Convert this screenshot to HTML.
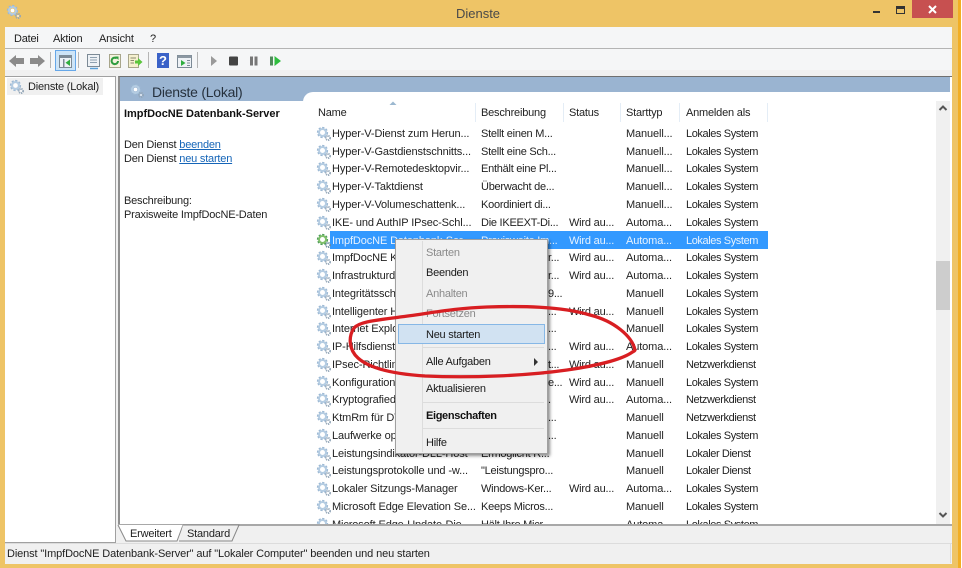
<!DOCTYPE html>
<html><head><meta charset="utf-8"><title>Dienste</title>
<style>
html,body{margin:0;padding:0}
body{width:962px;height:568px;position:relative;overflow:hidden;background:#fff;font-family:"Liberation Sans",sans-serif;font-size:11px;letter-spacing:-.4px;color:#222;filter:blur(.3px)}
div,span,svg{position:absolute}
.r{left:0;width:624px;height:18px;line-height:18px;white-space:nowrap}
.r span{top:0}
.r svg{left:4px;top:1px}
.a{left:20px;letter-spacing:-.12px}.b{left:169px;letter-spacing:-.25px}.c{left:257px;letter-spacing:-.2px}.d{left:314px;letter-spacing:-.12px}.e{left:374px}
.x{left:236px;letter-spacing:-.25px}
.h{top:104px;line-height:18px;color:#222;white-space:nowrap;letter-spacing:-.2px}
.v{top:103px;width:1px;height:19px;background:#e4edf6}
.m{left:30px;white-space:nowrap;line-height:16px;color:#1a1a1a;letter-spacing:-.25px}
.g{color:#8a8a8a}
.s{left:27px;width:121px;height:1px;background:#dcdcdc}
.t{white-space:nowrap;line-height:14px;letter-spacing:-.2px}
a{color:#1565b8;text-decoration:underline}
</style></head><body>
<svg width="0" height="0" style="left:0;top:0"><defs>
<symbol id="gear" viewBox="0 0 16 16">
<circle cx="6.500" cy="6.500" r="4.300" fill="none" stroke="#9db9d4" stroke-width="2.600" stroke-dasharray="2 1.300"/>
<circle cx="6.500" cy="6.500" r="3.500" fill="none" stroke="#b4cce2" stroke-width="2"/>
<circle cx="6.500" cy="6.500" r="1.900" fill="#fff"/>
<circle cx="12" cy="12" r="2.100" fill="none" stroke="#93a6b8" stroke-width="1.800" stroke-dasharray="1.200 .8"/>
<circle cx="12" cy="12" r=".9" fill="#fff"/>
</symbol>
<symbol id="gearg" viewBox="0 0 16 16">
<circle cx="6.500" cy="6.500" r="4.300" fill="none" stroke="#4f9d5b" stroke-width="2.600" stroke-dasharray="2 1.300"/>
<circle cx="6.500" cy="6.500" r="3.500" fill="none" stroke="#7fbf6a" stroke-width="2"/>
<circle cx="6.500" cy="6.500" r="1.900" fill="#fff"/>
<circle cx="12" cy="12" r="2.100" fill="none" stroke="#6a8aa0" stroke-width="1.800" stroke-dasharray="1.200 .8"/>
<circle cx="12" cy="12" r=".9" fill="#fff"/>
</symbol>
</defs></svg>

<!-- window frame -->
<div style="left:0;top:0;width:962px;height:568px;background:#eec466"></div>
<div style="left:958px;top:0;width:3px;height:568px;background:#f2ae24"></div>
<div style="left:961px;top:0;width:1px;height:568px;background:#fff"></div>
<svg style="left:6px;top:4px" width="16" height="16"><use href="#gear"/></svg>
<div style="left:378px;width:200px;top:5px;text-align:center;font-size:13px;letter-spacing:0;line-height:17px;color:#4a4a4a">Dienste</div>
<div style="left:873px;top:11px;width:7px;height:2px;background:#333"></div>
<div style="left:896px;top:6px;width:7px;height:4px;border:1.500px solid #333;border-top-width:3px"></div>
<div style="left:912px;top:0;width:41px;height:18px;background:#c75050"></div>
<svg style="left:927px;top:4px" width="11" height="11"><path d="M2 2L9 9M9 2L2 9" stroke="#fff" stroke-width="2"/></svg>

<!-- client -->
<div style="left:5px;top:27px;width:947px;height:537px;background:#f0f0f0"></div>
<div style="left:5px;top:27px;width:947px;height:21px;background:#f5f6f7"></div>
<div style="left:5px;top:48px;width:947px;height:1px;background:#b4b4b4"></div>
<div style="left:5px;top:49px;width:947px;height:21px;background:#f5f6f7"></div>
<div class="t" style="left:14px;top:32px;color:#1e1e1e">Datei</div>
<div class="t" style="left:53px;top:32px;color:#1e1e1e">Aktion</div>
<div class="t" style="left:99px;top:32px;color:#1e1e1e">Ansicht</div>
<div class="t" style="left:150px;top:32px;color:#1e1e1e">?</div>

<!-- toolbar -->
<svg style="left:0;top:49px" width="300" height="22">
<path d="M9 12L16 6V9H24V15H16V18Z" fill="#8b8b8b"/>
<path d="M45 12L38 6V9H30V15H38V18Z" fill="#8b8b8b"/>
<rect x="50" y="3" width="1" height="16" fill="#b5b5b5"/>
<rect x="55.500" y="1.500" width="20" height="20" fill="#cde4f7" stroke="#66a7e8"/>
<rect x="59.500" y="6.500" width="12" height="12" fill="#eef2f6" stroke="#7c8a96"/><rect x="59.500" y="6.500" width="12" height="2.500" fill="#7c8a96"/>
<path d="M70 10.500V17L65.500 13.800Z" fill="#2fae3f"/><rect x="63" y="10" width="1.500" height="8" fill="#7c8a96"/>
<rect x="78" y="3" width="1" height="16" fill="#b5b5b5"/>
<rect x="87.500" y="5.500" width="12" height="12" fill="#eef2f6" stroke="#7c8a96"/><path d="M90 8.500H97M90 11H97M90 13.500H97" stroke="#8ea0b0"/><path d="M90 19.500H98" stroke="#5ba0d8" stroke-width="1.500"/>
<rect x="109.500" y="5.500" width="11" height="13" fill="#f5f3df" stroke="#a8a68c"/><path d="M118 12a3.200 3.200 0 1 1-1.200-2.600" fill="none" stroke="#2f9d3f" stroke-width="2"/><path d="M115 7.500h3.500v3.500z" fill="#2f9d3f"/>
<rect x="128.500" y="5.500" width="10" height="13" fill="#f5f0cf" stroke="#a8a68c"/><path d="M130.500 9H136M130.500 11.500H134M130.500 14H134" stroke="#8a8a70"/><path d="M135 11.500h3V9l4.500 4-4.500 4v-2.500h-3z" fill="#5bc53c"/>
<rect x="148" y="3" width="1" height="16" fill="#b5b5b5"/>
<rect x="157" y="4" width="12" height="15" fill="#3a62c8"/>
<rect x="177.500" y="6.500" width="14" height="12" fill="#eef2f6" stroke="#7c8a96"/><rect x="177.500" y="6.500" width="14" height="2.500" fill="#8c98a2"/><path d="M181 11V17L185.500 14Z" fill="#2fae3f"/><path d="M187 11.500H190M187 14H190M187 16.500H190" stroke="#7c8a96"/>
<rect x="197" y="3" width="1" height="16" fill="#b5b5b5"/>
<path d="M211 7V17L217 12Z" fill="#9a9a9a"/>
<rect x="229" y="7.500" width="9" height="9" rx="1" fill="#444"/>
<rect x="250" y="7.500" width="3" height="9" fill="#777"/><rect x="254.500" y="7.500" width="3" height="9" fill="#777"/>
<rect x="270" y="7.500" width="3" height="9" fill="#4f8a5a"/><path d="M274.500 7V17L281 12Z" fill="#2fbe3f"/>
</svg>
<div style="left:157px;top:53px;width:12px;height:15px;text-align:center;color:#fff;font-size:13px;font-weight:bold;letter-spacing:0;line-height:15px">?</div>

<!-- left pane -->
<div style="left:5px;top:76px;width:111px;height:467px;background:#fff;border:1px solid #a0a0a0;border-left:0;box-sizing:border-box"></div>
<div style="left:7px;top:78px;width:96px;height:17px;background:#f0f0f0"></div>
<svg style="left:9px;top:79px" width="16" height="16"><use href="#gear"/></svg>
<div class="t" style="left:28px;top:80px;color:#222">Dienste (Lokal)</div>

<!-- right pane -->
<div style="left:118px;top:76px;width:834px;height:449px;background:#fff;border-left:2px solid #8f8f8f;border-top:1px solid #6f6f6f;box-sizing:border-box"></div>
<div style="left:120px;top:77px;width:830px;height:15px;background:#9ab4d1"></div>
<div style="left:120px;top:92px;width:183px;height:9px;background:#9ab4d1"></div>
<div style="left:303px;top:92px;width:12px;height:9px;background:#9ab4d1"></div>
<div style="left:303px;top:92px;width:30px;height:20px;background:#fff;border-radius:10px 0 0 0"></div>
<svg style="left:129px;top:83px" width="16" height="16"><use href="#gear"/></svg>
<div style="left:152px;top:84px;font-size:14px;letter-spacing:-.25px;line-height:17px;color:#26313d;white-space:nowrap">Dienste (Lokal)</div>

<div class="t" style="left:124px;top:107px;font-weight:bold;letter-spacing:-.03px;color:#111">ImpfDocNE Datenbank-Server</div>
<div class="t" style="left:124px;top:138px">Den Dienst <a>beenden</a></div>
<div class="t" style="left:124px;top:152px">Den Dienst <a>neu starten</a></div>
<div class="t" style="left:124px;top:194px">Beschreibung:</div>
<div class="t" style="left:124px;top:208px">Praxisweite ImpfDocNE-Daten</div>

<!-- column headers -->
<svg style="left:389px;top:101px" width="8" height="5"><path d="M.5 4L4 .5L7.500 4Z" fill="#9cb8d0"/></svg>
<div class="h" style="left:318px">Name</div>
<div class="h" style="left:481px">Beschreibung</div>
<div class="h" style="left:569px">Status</div>
<div class="h" style="left:626px">Starttyp</div>
<div class="h" style="left:686px">Anmelden als</div>
<div class="v" style="left:475px"></div><div class="v" style="left:563px"></div><div class="v" style="left:620px"></div><div class="v" style="left:679px"></div><div class="v" style="left:767px"></div>

<!-- list -->
<div style="left:312px;top:124px;width:624px;height:400px;overflow:hidden">
<div style="left:0;top:-1px;width:624px;height:402px">
<div class="r" style="top:2px"><svg width="16" height="16"><use href="#gear"/></svg><span class="a">Hyper-V-Dienst zum Herun...</span><span class="b">Stellt einen M...</span><span class="d">Manuell...</span><span class="e">Lokales System</span></div>
<div class="r" style="top:20px"><svg width="16" height="16"><use href="#gear"/></svg><span class="a">Hyper-V-Gastdienstschnitts...</span><span class="b">Stellt eine Sch...</span><span class="d">Manuell...</span><span class="e">Lokales System</span></div>
<div class="r" style="top:37px"><svg width="16" height="16"><use href="#gear"/></svg><span class="a">Hyper-V-Remotedesktopvir...</span><span class="b">Enthält eine Pl...</span><span class="d">Manuell...</span><span class="e">Lokales System</span></div>
<div class="r" style="top:55px"><svg width="16" height="16"><use href="#gear"/></svg><span class="a">Hyper-V-Taktdienst</span><span class="b">Überwacht de...</span><span class="d">Manuell...</span><span class="e">Lokales System</span></div>
<div class="r" style="top:73px"><svg width="16" height="16"><use href="#gear"/></svg><span class="a">Hyper-V-Volumeschattenk...</span><span class="b">Koordiniert di...</span><span class="d">Manuell...</span><span class="e">Lokales System</span></div>
<div class="r" style="top:91px"><svg width="16" height="16"><use href="#gear"/></svg><span class="a">IKE- und AuthIP IPsec-Schl...</span><span class="b">Die IKEEXT-Di...</span><span class="c">Wird au...</span><span class="d">Automa...</span><span class="e">Lokales System</span></div>
<div class="r" style="top:109px"><div style="left:18px;top:-1px;width:438px;height:18px;background:#3399ff"></div><svg width="16" height="16"><use href="#gearg"/></svg><span class="a" style="color:#e6f2ff">ImpfDocNE Datenbank-Ser...</span><span class="b" style="color:#e6f2ff">Praxisweite Im...</span><span class="c" style="color:#e6f2ff">Wird au...</span><span class="d" style="color:#e6f2ff">Automa...</span><span class="e" style="color:#e6f2ff">Lokales System</span></div>
<div class="r" style="top:126px"><svg width="16" height="16"><use href="#gear"/></svg><span class="a">ImpfDocNE Kommunikation</span><span class="x">r...</span><span class="c">Wird au...</span><span class="d">Automa...</span><span class="e">Lokales System</span></div>
<div class="r" style="top:144px"><svg width="16" height="16"><use href="#gear"/></svg><span class="a">Infrastrukturdienst</span><span class="x">r...</span><span class="c">Wird au...</span><span class="d">Automa...</span><span class="e">Lokales System</span></div>
<div class="r" style="top:162px"><svg width="16" height="16"><use href="#gear"/></svg><span class="a">Integritätsschlüssel</span><span class="x">9...</span><span class="d">Manuell</span><span class="e">Lokales System</span></div>
<div class="r" style="top:180px"><svg width="16" height="16"><use href="#gear"/></svg><span class="a">Intelligenter Hintergrund</span><span class="x">...</span><span class="c">Wird au...</span><span class="d">Manuell</span><span class="e">Lokales System</span></div>
<div class="r" style="top:197px"><svg width="16" height="16"><use href="#gear"/></svg><span class="a">Internet Explorer</span><span class="x">...</span><span class="d">Manuell</span><span class="e">Lokales System</span></div>
<div class="r" style="top:215px"><svg width="16" height="16"><use href="#gear"/></svg><span class="a">IP-Hilfsdienst</span><span class="x">...</span><span class="c">Wird au...</span><span class="d">Automa...</span><span class="e">Lokales System</span></div>
<div class="r" style="top:233px"><svg width="16" height="16"><use href="#gear"/></svg><span class="a">IPsec-Richtlinien</span><span class="x">t...</span><span class="c">Wird au...</span><span class="d">Manuell</span><span class="e">Netzwerkdienst</span></div>
<div class="r" style="top:251px"><svg width="16" height="16"><use href="#gear"/></svg><span class="a">Konfiguration</span><span class="x">e...</span><span class="c">Wird au...</span><span class="d">Manuell</span><span class="e">Lokales System</span></div>
<div class="r" style="top:268px"><svg width="16" height="16"><use href="#gear"/></svg><span class="a">Kryptografiedienste</span><span class="x">.</span><span class="c">Wird au...</span><span class="d">Automa...</span><span class="e">Netzwerkdienst</span></div>
<div class="r" style="top:286px"><svg width="16" height="16"><use href="#gear"/></svg><span class="a">KtmRm für DTC</span><span class="x">...</span><span class="d">Manuell</span><span class="e">Netzwerkdienst</span></div>
<div class="r" style="top:304px"><svg width="16" height="16"><use href="#gear"/></svg><span class="a">Laufwerke optimieren</span><span class="x">...</span><span class="d">Manuell</span><span class="e">Lokales System</span></div>
<div class="r" style="top:322px"><svg width="16" height="16"><use href="#gear"/></svg><span class="a">Leistungsindikator-DLL-Host</span><span class="b">Ermöglicht R...</span><span class="d">Manuell</span><span class="e">Lokaler Dienst</span></div>
<div class="r" style="top:339px"><svg width="16" height="16"><use href="#gear"/></svg><span class="a">Leistungsprotokolle und -w...</span><span class="b">"Leistungspro...</span><span class="d">Manuell</span><span class="e">Lokaler Dienst</span></div>
<div class="r" style="top:357px"><svg width="16" height="16"><use href="#gear"/></svg><span class="a">Lokaler Sitzungs-Manager</span><span class="b">Windows-Ker...</span><span class="c">Wird au...</span><span class="d">Automa...</span><span class="e">Lokales System</span></div>
<div class="r" style="top:375px"><svg width="16" height="16"><use href="#gear"/></svg><span class="a">Microsoft Edge Elevation Se...</span><span class="b">Keeps Micros...</span><span class="d">Manuell</span><span class="e">Lokales System</span></div>
<div class="r" style="top:393px"><svg width="16" height="16"><use href="#gear"/></svg><span class="a">Microsoft Edge-Update-Die...</span><span class="b">Hält Ihre Micr...</span><span class="d">Automa...</span><span class="e">Lokales System</span></div>
</div></div>

<!-- scrollbar -->
<div style="left:936px;top:101px;width:14px;height:423px;background:#f0f0f0"></div>
<div style="left:936px;top:261px;width:14px;height:49px;background:#cdcdcd"></div>
<svg style="left:938px;top:104px" width="10" height="8"><path d="M1.500 6L5 2.500L8.500 6" fill="none" stroke="#555" stroke-width="2"/></svg>
<svg style="left:938px;top:511px" width="10" height="8"><path d="M1.500 2L5 5.500L8.500 2" fill="none" stroke="#555" stroke-width="2"/></svg>

<!-- tabs and status -->
<div style="left:118px;top:524px;width:834px;height:2px;background:#a8a8a8"></div>
<svg style="left:115px;top:524px" width="130" height="20"><path d="M3 1L11 17H62L68 1" fill="#fff" stroke="#888"/><path d="M68 1H124L117 17H64" fill="#f0f0f0" stroke="#888"/></svg>
<div class="t" style="left:130px;top:527px">Erweitert</div>
<div class="t" style="left:187px;top:527px">Standard</div>
<div style="left:5px;top:543px;width:947px;height:1px;background:#dcdcdc"></div>
<div style="left:950px;top:544px;width:1px;height:19px;background:#dcdcdc"></div>
<div class="t" style="left:7px;top:547px;color:#1e1e1e;letter-spacing:-.12px">Dienst "ImpfDocNE Datenbank-Server" auf "Lokaler Computer" beenden und neu starten</div>

<!-- context menu -->
<div style="left:395px;top:239px;width:151px;height:213px;background:#f0f0f0;border:1px solid #a0a0a0;box-sizing:content-box;box-shadow:2px 2px 3px rgba(0,0,0,.45)">
<div style="left:26px;top:1px;width:1px;height:211px;background:#dcdcdc"></div>
<div style="left:2px;top:84px;width:145px;height:18px;background:#d1e2f2;border:1px solid #86b7e6"></div>
<div class="m g" style="top:5px">Starten</div>
<div class="m" style="top:25px">Beenden</div>
<div class="m g" style="top:46px">Anhalten</div>
<div class="m g" style="top:66px">Fortsetzen</div>
<div class="m" style="top:87px">Neu starten</div>
<div class="s" style="top:107px"></div>
<div class="m" style="top:114px">Alle Aufgaben</div>
<svg style="left:137px;top:118px" width="6" height="8"><path d="M1 0L5 4L1 8Z" fill="#333"/></svg>
<div class="s" style="top:134px"></div>
<div class="m" style="top:141px">Aktualisieren</div>
<div class="s" style="top:162px"></div>
<div class="m" style="top:168px;font-weight:bold;color:#111;letter-spacing:-.35px">Eigenschaften</div>
<div class="s" style="top:188px"></div>
<div class="m" style="top:195px">Hilfe</div>
</div>

<!-- red annotation -->
<svg style="left:0;top:0" width="962" height="568">
<path d="M635 350C632 336 614 321 590 315C560 306 520 306 487 307C455 308 425 314 400 317C380 320 360 321 354 328C348 337 349 350 358 358C370 369 395 374 425 376C470 378 525 376 567 370C595 366 620 360 631 353C634 351 635 351 635 350" fill="none" stroke="#d81e22" stroke-width="3.300" stroke-linecap="round"/>
</svg>
</body></html>
